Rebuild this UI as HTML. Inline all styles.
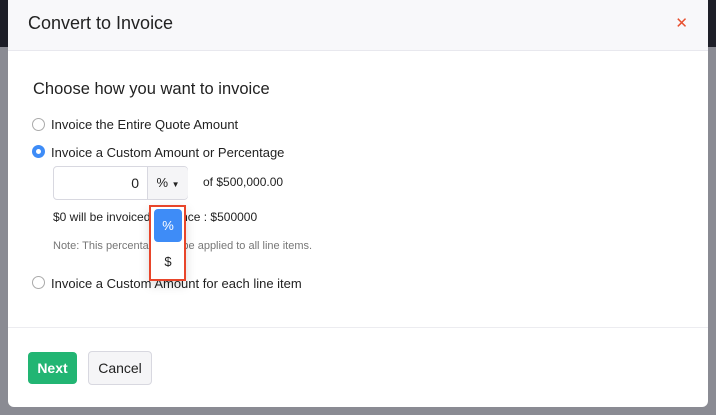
<!DOCTYPE html><html><head><style>
body{margin:0;width:716px;height:415px;position:relative;overflow:hidden;background:#8a8b93;font-family:"Liberation Sans",sans-serif;}
.topbar{position:absolute;left:0;top:0;width:716px;height:47px;background:#1e1f28}
.m{position:absolute;left:8px;top:0;width:700px;height:407px;background:#fff;border-radius:0 0 6px 6px;}
.hd{height:50px;background:#f8f8fa;border-bottom:1px solid #e8e8ee;position:relative}
.hd .t{position:absolute;left:20px;top:13px;font-size:18px;color:#222}
.x{position:absolute;right:20px;top:14px;color:#e8502f;font-size:15px}
.ab{position:absolute;color:#222;font-size:13px;white-space:nowrap}
.r{position:absolute;width:11px;height:11px;border:1px solid #aaa;border-radius:50%;background:#fff}
.r.on{border:none;width:13px;height:13px;background:#3e8cf7}
.r.on:after{content:"";position:absolute;left:4px;top:4px;width:5px;height:5px;border-radius:50%;background:#fff}
.inp{position:absolute;left:45px;top:166px;width:133px;height:32px;border:1px solid #d8d8e0;border-radius:4px;}
.btn{position:absolute;top:351px;height:32px;border-radius:4px;font-size:14px;line-height:32px;text-align:center}
</style></head><body>
<div class="topbar"></div>
<div class="m">
<div class="hd"><div class="t">Convert to Invoice</div><div class="x">✕</div></div>
<div class="ab" style="left:25px;top:80px;font-size:16.5px">Choose how you want to invoice</div>
<div class="r" style="left:24px;top:118px"></div>
<div class="ab" style="left:43px;top:117px">Invoice the Entire Quote Amount</div>
<div class="r on" style="left:24px;top:145px"></div>
<div class="ab" style="left:43px;top:145px">Invoice a Custom Amount or Percentage</div>
<div class="inp"><div style="position:absolute;left:0;top:0;width:85px;height:32px;line-height:32px;text-align:right;font-size:14px;color:#222">0</div>
<div style="position:absolute;left:93px;top:0;width:40px;height:32px;background:#f5f5f7;border-left:1px solid #d8d8e0;border-radius:0 4px 4px 0;line-height:32px;font-size:13px;text-align:center;color:#222">% <span style="font-size:8px">▼</span></div></div>
<div class="ab" style="left:195px;top:175px;font-size:12px">of $500,000.00</div>
<div class="ab" style="left:45px;top:210px;font-size:12px">$0 will be invoiced. Balance : $500000</div>
<div class="ab" style="left:45px;top:240px;font-size:11px;color:#777">Note: This percentage will be applied to all line items.</div>
<div class="r" style="left:24px;top:276px"></div>
<div class="ab" style="left:43px;top:276px">Invoice a Custom Amount for each line item</div>
<div style="position:absolute;left:141px;top:205px;width:33px;height:72px;background:#fff;border:2px solid #e8452a;box-shadow:0 4px 10px rgba(0,0,0,.15)">
<div style="position:absolute;left:3px;top:2px;width:28px;height:33px;background:#3e8cf7;border-radius:4px;color:#fff;text-align:center;line-height:33px;font-size:13px">%</div>
<div style="position:absolute;left:3px;top:38px;width:28px;height:33px;text-align:center;line-height:33px;font-size:13px;color:#222">$</div></div>
<div style="position:absolute;left:0;top:327px;width:700px;border-top:1px solid #ececf0"></div>
<div class="btn" style="left:20px;width:49px;background:#22b573;color:#fff;font-weight:bold;top:352px">Next</div>
<div class="btn" style="left:80px;width:62px;background:#f5f5f7;border:1px solid #d8d8e0;color:#222">Cancel</div>
</div>
</body></html>
